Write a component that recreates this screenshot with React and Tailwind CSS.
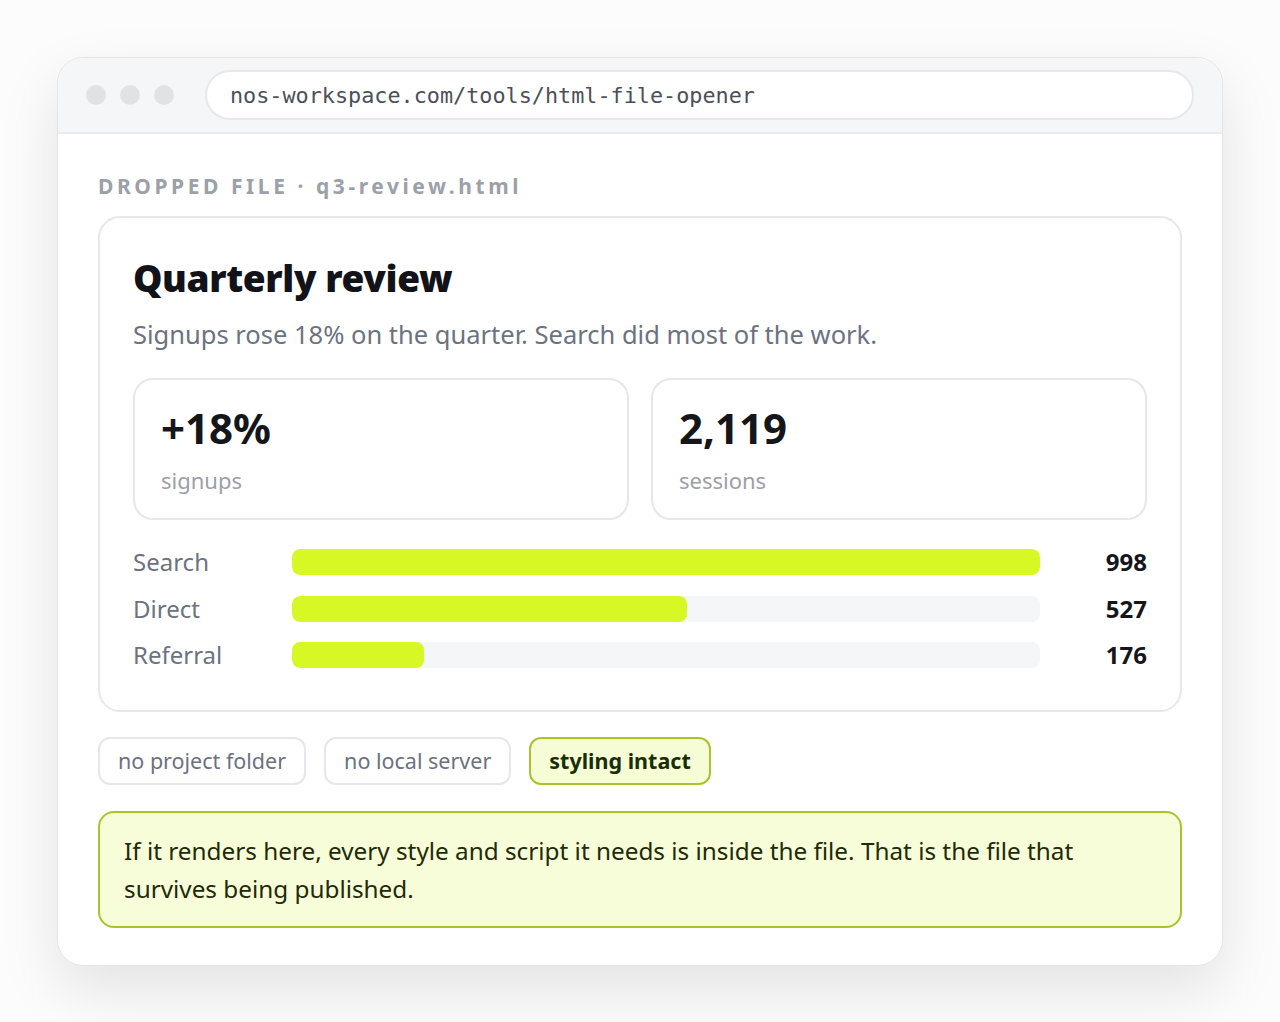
import React from "react";

const sources = [
  { label: "Search", value: 998 },
  { label: "Direct", value: 527 },
  { label: "Referral", value: 176 },
];

const max = 998;

function Stat({ value, label }) {
  return (
    <div className="flex-1 rounded-[20px] border-2 border-[#e6e7ea] bg-white px-[26px] pt-[22px] pb-[22px]">
      <div className="text-[42px] font-bold leading-[52px] text-[#14161a]">{value}</div>
      <div className="mt-[10px] text-[22px] leading-[32px] text-[#9ca0a8]">{label}</div>
    </div>
  );
}

function Chip({ children, active }) {
  return active ? (
    <div className="flex h-[48px] items-center rounded-[12px] border-2 border-[#aac32c] bg-[#f6fdd6] px-[18px] text-[21.5px] font-bold text-[#1a2e05]">
      {children}
    </div>
  ) : (
    <div className="flex h-[48px] items-center rounded-[12px] border-2 border-[#e6e7ea] bg-white px-[18px] text-[21.5px] text-[#6b7280]">
      {children}
    </div>
  );
}

export default function App() {
  return (
    <div
      className="min-h-screen bg-[#fcfcfc] px-[57px] pt-[57px] pb-[57px]"
      style={{ fontFamily: '"Noto Sans", "Open Sans", sans-serif' }}
    >
      <div className="overflow-hidden rounded-[26px] border border-[#e3e5e8] bg-white shadow-[0_24px_60px_rgba(0,0,0,0.10)]">
        {/* window chrome */}
        <div className="flex h-[76px] items-center border-b-2 border-[#e8eaed] bg-[#f5f6f8] pl-[28px] pr-[28px]">
          <div className="flex gap-[14px]">
            <span className="h-5 w-5 rounded-full bg-[#e0e2e6]" />
            <span className="h-5 w-5 rounded-full bg-[#e0e2e6]" />
            <span className="h-5 w-5 rounded-full bg-[#e0e2e6]" />
          </div>
          <div
            className="ml-[31px] flex h-[50px] flex-1 items-center rounded-full border-2 border-[#e6e8eb] bg-white pl-[23px] pt-[2px] text-[21.8px] text-[#4b5058]"
            style={{ fontFamily: '"DejaVu Sans Mono", "Liberation Mono", monospace' }}
          >
            nos-workspace.com/tools/html-file-opener
          </div>
        </div>

        {/* page body */}
        <div className="px-[40px] pt-[37px] pb-[37px]">
          <div className="mb-[15px] text-[21px] font-bold uppercase leading-[30px] tracking-[0.17em] text-[#9ca0a8]">
            Dropped file · <span className="normal-case">q3-review.html</span>
          </div>

          <div className="rounded-[22px] border-2 border-[#e6e7ea] px-[33px] pt-[35px] pb-[42px]">
            <h1 className="text-[37px] font-black leading-[50px] tracking-[-0.01em] text-[#111318]">
              Quarterly review
            </h1>
            <p className="mt-[13px] text-[25.5px] leading-[36px] text-[#6b7280]">
              Signups rose 18% on the quarter. Search did most of the work.
            </p>

            <div className="mt-[26px] flex gap-[22px]">
              <Stat value="+18%" label="signups" />
              <Stat value="2,119" label="sessions" />
            </div>

            <div className="mt-[29px] flex flex-col gap-[20.5px]">
              {sources.map((s) => (
                <div key={s.label} className="flex h-[26px] items-center">
                  <div className="w-[159px] text-[24px] text-[#6b7280]">{s.label}</div>
                  <div className="h-[26px] w-[748px] overflow-hidden rounded-[8px] bg-[#f5f6f8]">
                    <div
                      className="h-full rounded-[8px] bg-[#d8f825]"
                      style={{ width: `${(s.value / max) * 100}%` }}
                    />
                  </div>
                  <div className="flex-1 text-right text-[24px] font-bold text-[#14161a]">{s.value}</div>
                </div>
              ))}
            </div>
          </div>

          <div className="mt-[25px] flex gap-[18px]">
            <Chip>no project folder</Chip>
            <Chip>no local server</Chip>
            <Chip active>styling intact</Chip>
          </div>

          <div className="mt-[26px] rounded-[16px] border-2 border-[#aac32c] bg-[#f6fdd8] px-[24px] pt-[19px] pb-[18px] text-[24.3px] leading-[38px] text-[#1f2a08]">
            If it renders here, every style and script it needs is inside the file. That is the file that
            survives being published.
          </div>
        </div>
      </div>
    </div>
  );
}
